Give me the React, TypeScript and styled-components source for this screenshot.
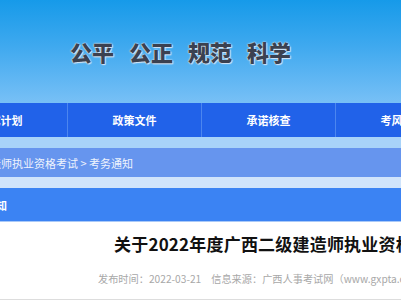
import styled, { createGlobalStyle } from 'styled-components';

const GlobalStyle = createGlobalStyle`
  html, body {
    margin: 0;
    padding: 0;
    background: #ffffff;
  }
  body {
    width: 401px;
    overflow: hidden;
    font-family: 'Noto Sans CJK SC', 'Noto Sans', sans-serif;
  }
`;

const Page = styled.div`
  width: 401px;
  overflow: hidden;
`;

const Header = styled.header`
  height: 103px;
  box-sizing: border-box;
  padding: 37px 0 0 70px;
  background: linear-gradient(180deg, #169ae9 0%, #3fa9ef 45%, #78c0f6 100%);
`;

const Slogan = styled.div`
  display: flex;
  gap: 15px;
`;

const SloganWord = styled.span`
  font-size: 22px;
  font-weight: 900;
  line-height: 28px;
  color: #3b4150;
  text-shadow:
    0 0 1px #e8f2fb,
    0 0 2px #dbe9f7,
    1px 1px 1px #cfe0f2;
`;

const Nav = styled.nav`
  height: 34px;
  background: #2162e9;
  overflow: hidden;
`;

const NavList = styled.ul`
  display: flex;
  margin: 0 0 0 -66px;
  padding: 0;
  list-style: none;
`;

const NavItem = styled.li`
  flex: 0 0 134px;
  box-sizing: border-box;
  border-right: 1px solid #4c86ef;
  text-align: center;
  line-height: 34px;
  font-size: 11px;
  font-weight: 700;
  color: #ffffff;
  white-space: nowrap;
`;

const Strip = styled.div<{ $color: string }>`
  height: 11px;
  background: ${(p) => p.$color};
`;

const Breadcrumb = styled.div`
  height: 29px;
  background: #6695ee;
  overflow: hidden;
  display: flex;
  align-items: center;
`;

const Crumbs = styled.span`
  margin-left: -21px;
  font-size: 11px;
  color: #eef3fd;
  white-space: nowrap;
`;

const SectionBar = styled.div`
  height: 34px;
  box-sizing: border-box;
  background: #3b83f3;
  border-bottom: 1px solid #a9c9f8;
  overflow: hidden;
  display: flex;
  align-items: center;
`;

const SectionTitle = styled.span`
  margin-left: -37px;
  font-size: 11px;
  font-weight: 700;
  color: #ffffff;
  white-space: nowrap;
`;

const Article = styled.article`
  height: 77px;
  border-bottom: 1px solid #dddddd;
  overflow: hidden;
`;

const Title = styled.h1`
  margin: 0;
  padding: 10px 0 0 114px;
  font-size: 17px;
  letter-spacing: 0.2px;
  line-height: 24px;
  font-weight: 700;
  color: #111111;
  white-space: nowrap;
`;

const Meta = styled.div`
  display: flex;
  gap: 10px;
  margin-top: 16px;
  padding-left: 98px;
  font-size: 10.2px;
  line-height: 14px;
  color: #a8a8a8;
  white-space: nowrap;
`;

const navItems = ['考试计划', '政策文件', '承诺核查', '考风考纪'];
const slogan = ['公平', '公正', '规范', '科学'];

export default function App() {
  return (
    <Page>
      <GlobalStyle />
      <Header>
        <Slogan>
          {slogan.map((w) => (
            <SloganWord key={w}>{w}</SloganWord>
          ))}
        </Slogan>
      </Header>
      <Nav>
        <NavList>
          {navItems.map((item) => (
            <NavItem key={item}>{item}</NavItem>
          ))}
        </NavList>
      </Nav>
      <Strip $color="#a8d3f9" />
      <Breadcrumb>
        <Crumbs>建造师执业资格考试 &gt; 考务通知</Crumbs>
      </Breadcrumb>
      <Strip $color="#d0e4fb" />
      <SectionBar>
        <SectionTitle>考务通知</SectionTitle>
      </SectionBar>
      <Article>
        <Title>关于2022年度广西二级建造师执业资格考试考务工作的通知</Title>
        <Meta>
          <span>发布时间：2022-03-21</span>
          <span>信息来源：广西人事考试网（www.gxpta.com）</span>
        </Meta>
      </Article>
    </Page>
  );
}
